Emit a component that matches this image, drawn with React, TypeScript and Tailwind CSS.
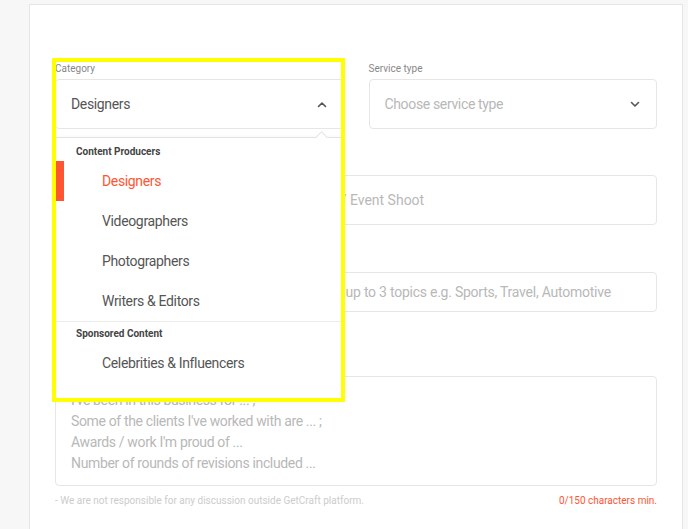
import React from "react";

function ChevronDown() {
  return (
    <svg width="10" height="7" viewBox="0 0 10 7" fill="none">
      <polyline points="1.5,1.5 5,5 8.5,1.5" stroke="#555" strokeWidth="1.6" strokeLinecap="round" strokeLinejoin="round" />
    </svg>
  );
}

function ChevronUp() {
  return (
    <svg width="10" height="7" viewBox="0 0 10 7" fill="none">
      <polyline points="1.5,5.5 5,2 8.5,5.5" stroke="#555" strokeWidth="1.6" strokeLinecap="round" strokeLinejoin="round" />
    </svg>
  );
}

const items = ["Designers", "Videographers", "Photographers", "Writers & Editors"];

export default function App() {
  return (
    <div
      className="relative min-h-[529px] bg-[#f7f7f7] overflow-hidden"
      style={{ fontFamily: "Roboto, 'Liberation Sans', sans-serif" }}
    >
      <div className="ml-[29px] mr-[5px] pt-[4px]">
        <div className="bg-white border border-[#e6e6e6] h-[540px] px-[25px] pt-[58px]">
          {/* Row 1 */}
          <div className="grid grid-cols-2 gap-[25px]">
            <div>
              <div className="text-[10px] leading-[12px] text-[#888]">Category</div>
              <div className="mt-[4px] h-[50px] border border-[#e6e6e6] rounded-[4px] flex items-center justify-between pl-[15px] pr-[16px]">
                <span className="text-[14px] tracking-[-0.35px] text-[#555]">Designers</span>
                <ChevronUp />
              </div>
            </div>
            <div>
              <div className="text-[10px] leading-[12px] text-[#888]">Service type</div>
              <div className="mt-[4px] h-[50px] border border-[#e6e6e6] rounded-[4px] flex items-center justify-between pl-[15px] pr-[16px]">
                <span className="text-[14px] tracking-[-0.35px] text-[#b8b8b8]">Choose service type</span>
                <ChevronDown />
              </div>
            </div>
          </div>

          {/* Row 2 */}
          <div className="mt-[30px]">
            <div className="text-[10px] leading-[12px] text-[#888]">Service title</div>
            <div className="mt-[4px] h-[50px] border border-[#e6e6e6] rounded-[4px] flex items-center pl-[15px]">
              <span className="text-[14px] text-[#b8b8b8] whitespace-nowrap">e.g. Logo Design, Product Catalogue Photo / Event Shoot</span>
            </div>
          </div>

          {/* Row 3 */}
          <div className="mt-[31px]">
            <div className="text-[10px] leading-[12px] text-[#888]">Topics</div>
            <div className="mt-[4px] h-[40px] border border-[#e6e6e6] rounded-[4px] flex items-center pl-[15px]">
              <span className="text-[14px] tracking-[-0.24px] text-[#b8b8b8] whitespace-nowrap">Enter all the topics you are most familiar with, up to 3 topics e.g. Sports, Travel, Automotive</span>
            </div>
          </div>

          {/* Textarea */}
          <div className="mt-[48px]">
            <div className="text-[10px] leading-[12px] text-[#888]">Description</div>
            <div className="mt-[4px] h-[110px] border border-[#e6e6e6] rounded-[4px] pl-[15px] pt-[13px]">
              <div className="text-[14px] leading-[21px] tracking-[-0.35px] text-[#b8b8b8]">
                <div>I've been in this business for ... ;</div>
                <div>Some of the clients I've worked with are ... ;</div>
                <div>Awards / work I'm proud of ...</div>
                <div>Number of rounds of revisions included ...</div>
              </div>
            </div>
            <div className="mt-[9px] flex justify-between text-[10px] leading-[12px]">
              <span className="text-[#cccccc]">- We are not responsible for any discussion outside GetCraft platform.</span>
              <span className="text-[#ff5533]">0/150 characters min.</span>
            </div>
          </div>
        </div>
      </div>

      {/* Dropdown overlay */}
      <div className="absolute left-[55px] top-[137px] w-[288px] bg-white border-t border-[#e2e2e2] shadow-[0_2px_6px_rgba(0,0,0,0.08)] pt-[7px] pb-[16px]">
        <div className="absolute left-[262px] top-[-5px] w-[9px] h-[9px] bg-white border-t border-l border-[#e2e2e2] rotate-45" />
        <div className="pl-[21px] text-[10px] leading-[14px] font-bold text-[#444]">Content Producers</div>
        <div className="mt-[2px]">
          {items.map((it, i) => (
            <div key={it} className="relative h-[40px] flex items-center pl-[47px]">
              {i === 0 && <div className="absolute left-0 top-0 h-[40px] w-[9px] bg-[#ff5533]" />}
              <span className={i === 0 ? "text-[14px] tracking-[-0.35px] text-[#ff5533]" : "text-[14px] tracking-[-0.35px] text-[#555]"}>{it}</span>
            </div>
          ))}
        </div>
        <div className="border-t border-[#ececec]" />
        <div className="mt-[5px] pl-[21px] text-[10px] leading-[14px] font-bold text-[#444]">Sponsored Content</div>
        <div className="mt-[2px] h-[40px] flex items-center pl-[47px]">
          <span className="text-[14px] tracking-[-0.35px] text-[#555]">Celebrities &amp; Influencers</span>
        </div>
      </div>

      {/* Yellow highlight */}
      <div className="absolute left-[52px] top-[58px] w-[293px] h-[344px] border-4 border-[#ffff00] pointer-events-none" />
    </div>
  );
}
